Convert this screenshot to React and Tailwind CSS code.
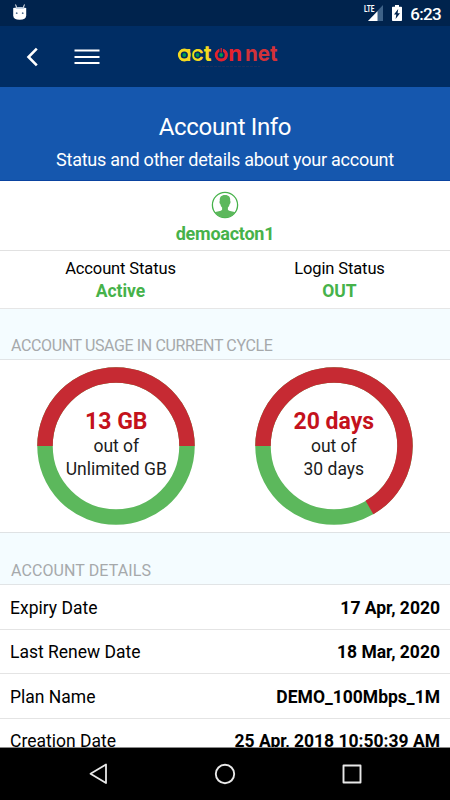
const details = [
  { label: "Expiry Date", value: "17 Apr, 2020" },
  { label: "Last Renew Date", value: "18 Mar, 2020" },
  { label: "Plan Name", value: "DEMO_100Mbps_1M" },
  { label: "Creation Date", value: "25 Apr, 2018 10:50:39 AM" },
];

function StatusBar() {
  return (
    <div className="flex h-[26px] shrink-0 items-center justify-between bg-[#00234d] pr-[9px] pl-3">
      <svg className="h-[18px] w-4" viewBox="0 0 16 18">
        <path d="M3.6 0.5l1 3.2M12.4 0.5l-1 3.2" stroke="#fff" strokeWidth="1" />
        <path d="M1.2 4Q8 2.6 14.2 4v7.500Q14 15.800 7.700 15.800T1.200 11.500z" fill="#fff" />
        <path d="M3.500 4Q8 2 12.500 4l-.8.800H4.300z" fill="#b9c9dc" />
        <circle cx="4.700" cy="9.200" r=".9" fill="#54708f" />
        <circle cx="10.700" cy="9.200" r=".9" fill="#54708f" />
      </svg>
      <div className="flex items-center">
        <svg className="h-[26px] w-5" viewBox="0 0 20 26">
          <path d="M20 5v16H5z" fill="#3e6288" />
          <path d="M14.500 11.200V21H5z" fill="#fff" />
          <path d="M0 4h12v9H0z" fill="#00234d" />
          <text x="1" y="12.300" fontSize="9.500" fontWeight="700" fill="#fff" fontFamily="Roboto" textLength="10.500" lengthAdjust="spacingAndGlyphs">LTE</text>
        </svg>
        <svg className="ml-[9px] h-4 w-[10px]" viewBox="0 0 10 16">
          <path d="M3 0h4v1.700h2.200q.8 0 .8.800v12.700q0 .8-.8.800H.8q-.8 0-.8-.8V2.500q0-.8.8-.8H3z" fill="#fff" />
          <path d="M6.200 4L2 9.500h2.300L3.600 14 8 8.300H5.600z" fill="#00234d" />
        </svg>
        <span className="ml-2 pt-px text-[17px] leading-5 font-medium tracking-[-0.7px] text-white">6:23</span>
      </div>
    </div>
  );
}

function Logo() {
  return (
    <svg className="ml-[76px] h-11 w-[104px]" viewBox="0 0 104 44" fontFamily="Inter" fontWeight="700" fontSize="22">
      <g style={{ fontFeatureSettings: '"cv11", "ss01"' }}>
        <text x="2" y="26.300" fill="#f5d81f" textLength="33.500" lengthAdjust="spacingAndGlyphs">act</text>
        <text x="38.500" y="26.300" fill="#e4232f" textLength="27.500" lengthAdjust="spacingAndGlyphs">on</text>
        <text x="69" y="26.300" fill="#d23239" textLength="32.500" lengthAdjust="spacingAndGlyphs">net</text>
      </g>
      {/* target rings */}
      <circle cx="8.300" cy="20" r="5" fill="#002d64" stroke="#f5d81f" strokeWidth="2.800" />
      <circle cx="8.300" cy="20" r="1.900" fill="#009b4e" />
      <circle cx="21.500" cy="20" r="3.400" fill="#002d64" />
      <circle cx="21.500" cy="20" r="1.900" fill="#009b4e" />
      <circle cx="45.200" cy="20" r="5" fill="#002d64" stroke="#e4232f" strokeWidth="2.800" />
      <path d="M45.200 12.500v4.500" stroke="#002d64" strokeWidth="3.600" />
      <path d="M45.200 13v4.500" stroke="#e4232f" strokeWidth="1.200" />
      <circle cx="45.200" cy="20" r="1.900" fill="#009b4e" />
      <path d="M22 31.500h62" stroke="#1b305f" strokeWidth="1" strokeDasharray="3 1" />
    </svg>
  );
}

function Header() {
  return (
    <header className="flex h-[61px] shrink-0 items-center bg-[#002d64]">
      <svg className="ml-[26px] h-5 w-3" viewBox="0 0 12 20" fill="none" stroke="#fff" strokeWidth="2.600">
        <path d="M10.800 1.700L2.500 10l8.300 8.300" />
      </svg>
      <svg className="ml-9 h-4 w-[26px]" viewBox="0 0 26 16" stroke="#fff" strokeWidth="2.200">
        <path d="M.5 1.500h25M.5 8h25M.5 14h25" />
      </svg>
      <Logo />
    </header>
  );
}

function UsageRing({ used, total, percent }) {
  // arc starts at nine o'clock and runs clockwise
  return (
    <div className="grid h-[158px] w-[158px] shrink-0">
      <svg className="col-start-1 row-start-1" viewBox="0 0 158 158" fill="none" strokeWidth="15.500">
        <circle cx="79" cy="79" r="71" stroke="#5cb85c" />
        <circle
          cx="79"
          cy="79"
          r="71"
          stroke="#c62a33"
          pathLength="100"
          strokeDasharray={`${percent} 100`}
          transform="rotate(180 79 79)"
        />
      </svg>
      <div className="col-start-1 row-start-1 flex flex-col items-center pt-[41px] text-[17.5px] leading-[23px] text-[#1c1c1c]">
        <span className="text-[23px] leading-[27px] font-bold text-[#c4121c]">{used}</span>
        <span>out of</span>
        <span>{total}</span>
      </div>
    </div>
  );
}

function NavBar() {
  return (
    <nav className="flex h-[53px] shrink-0 items-center justify-between border-t border-[#8a8a8a] bg-black pr-[87px] pl-[89px]">
      <svg className="h-[22px] w-5" viewBox="0 0 20 22" fill="none" stroke="#e8e8e8" strokeWidth="1.800" strokeLinejoin="round">
        <path d="M17 1.500v18.500L1.500 10.800z" />
      </svg>
      <svg className="h-[22px] w-[22px]" viewBox="0 0 22 22" fill="none" stroke="#e8e8e8" strokeWidth="1.900">
        <circle cx="11" cy="11" r="9.200" />
      </svg>
      <svg className="h-[22px] w-[22px]" viewBox="0 0 22 22" fill="none" stroke="#e8e8e8" strokeWidth="1.900" strokeLinejoin="round">
        <rect x="2.500" y="2.500" width="17" height="17" />
      </svg>
    </nav>
  );
}

export default function App() {
  return (
    <div className="flex h-[800px] w-[450px] flex-col overflow-hidden bg-white font-[Roboto,sans-serif] text-black">
      <StatusBar />
      <Header />

      {/* Banner */}
      <div className="flex h-[94px] shrink-0 flex-col items-center border-b border-[#0a43a0] bg-[#1557ae] pt-[26px] text-white">
        <h1 className="text-[24px] leading-7 tracking-[-0.35px]">Account Info</h1>
        <p className="mt-2 text-[18px] leading-[22px] tracking-[-0.25px]">Status and other details about your account</p>
      </div>

      {/* User */}
      <div className="flex h-[70px] shrink-0 flex-col items-center border-b border-[#e1e1e1] pt-[10px] text-[#46b24a]">
        <svg className="h-7 w-7" viewBox="0 0 28 28">
          <circle cx="14" cy="14" r="12.600" fill="none" stroke="currentColor" strokeWidth="1.300" />
          <path
            d="M14 4c-4 0-5.600 2.300-5.200 5.900-.7.500-.3 2.500.5 3 .4 2 1.100 3 1.800 3.700v2.200c-1 1.600-5.200 1.300-7.700 2.700A12.600 12.600 0 0 0 14 26.600 12.600 12.600 0 0 0 24.600 21.500c-2.500-1.400-6.700-1.100-7.700-2.700v-2.200c.7-.7 1.400-1.700 1.800-3.700.8-.5 1.200-2.500.5-3 .4-3.600-1.200-5.900-5.200-5.900z"
            fill="#5cb85c"
          />
        </svg>
        <span className="mt-1 text-[18px] leading-[22px] font-bold tracking-[-0.25px]">demoacton1</span>
      </div>

      {/* Status */}
      <div className="flex h-[58px] shrink-0 border-b border-[#e6e6e6] pt-[6px] text-center text-[16.5px] leading-[23px]">
        <div className="w-[241px]">
          <p className="tracking-[-0.12px]">Account Status</p>
          <p className="text-[17.5px] font-bold text-[#46b24a]">Active</p>
        </div>
        <div className="w-[197px]">
          <p className="tracking-[-0.12px]">Login Status</p>
          <p className="text-[17.5px] font-bold text-[#46b24a]">OUT</p>
        </div>
      </div>

      <h2 className="flex h-[51px] shrink-0 items-end border-b border-[#e1e4e6] bg-[#f4fcff] pb-1 pl-[11px] text-[16px] leading-[18px] tracking-[-0.38px] text-[#a6a9ab]">
        ACCOUNT USAGE IN CURRENT CYCLE
      </h2>
      <div className="flex h-[173px] shrink-0 gap-[59.5px] border-b border-[#dfe2e4] pt-[7px] pl-[37.3px]">
        <UsageRing used="13 GB" total="Unlimited GB" percent={50} />
        <UsageRing used="20 days" total="30 days" percent={66.67} />
      </div>

      <h2 className="flex h-[52px] shrink-0 items-end border-b border-[#e1e4e6] bg-[#f4fcff] pb-1 pl-[11px] text-[16px] leading-[18px] tracking-[0.1px] text-[#a6a9ab]">
        ACCOUNT DETAILS
      </h2>
      <dl className="min-h-0 flex-1 overflow-hidden">
        {details.map((row) => (
          <div key={row.label} className="flex h-[44.5px] items-center justify-between border-b border-[#e4e4e4] px-[10px] pt-[2.5px] text-[17.5px]">
            <dt>{row.label}</dt>
            <dd className="font-bold">{row.value}</dd>
          </div>
        ))}
      </dl>
      <NavBar />
    </div>
  );
}
